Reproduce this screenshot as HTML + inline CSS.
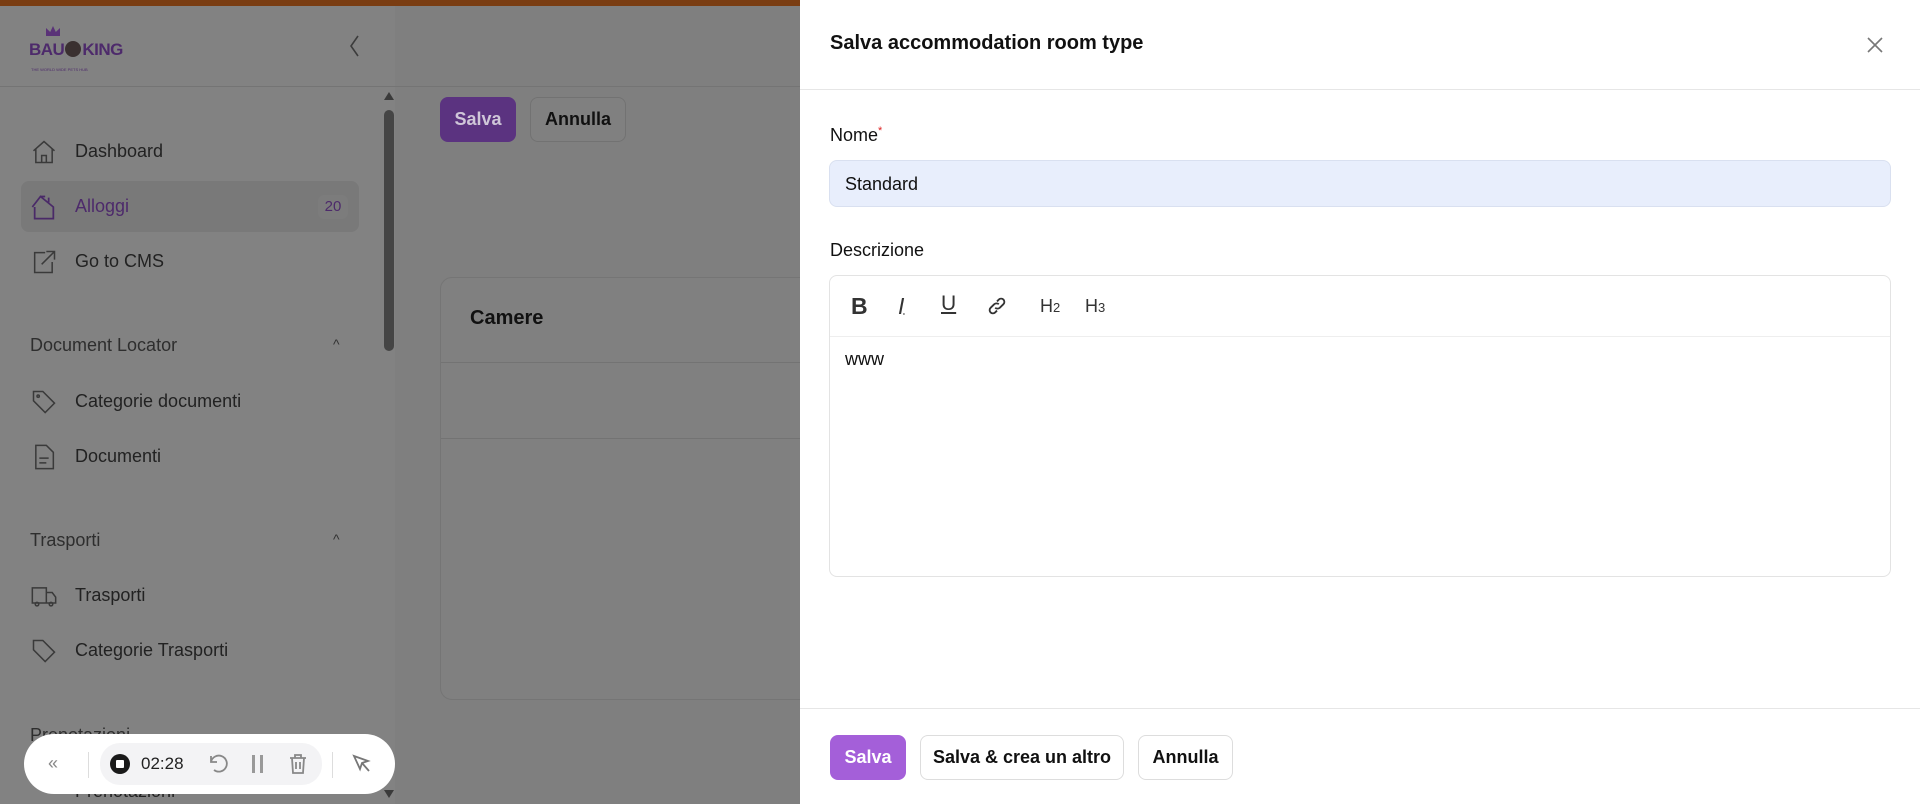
<!DOCTYPE html>
<html><head><meta charset="utf-8"><style>
*{box-sizing:border-box;margin:0;padding:0}
body{width:1920px;height:804px;overflow:hidden;font-family:"Liberation Sans",sans-serif;background:#7f7f7f;position:relative;color:#1c1c1c}
.a{position:absolute}
.nav{position:absolute;left:75px;font-size:18px;color:#222}
.ic{position:absolute;left:30px;width:28px;height:28px}
.btn{position:absolute;border-radius:8px;font-size:18px;font-weight:bold;display:flex;align-items:center;justify-content:center}
</style></head><body>
<div class="a" style="left:0;top:0;width:800px;height:6px;background:#7a3d12"></div>
<div class="a" style="left:0;top:6px;width:395px;height:798px;background:#828282"></div>
<div class="a" style="left:0;top:86px;width:800px;height:1px;background:#747474"></div>
<!-- logo -->
<div class="a" style="left:29px;top:40px;font-size:17px;font-weight:bold;color:#4d2a6b;letter-spacing:-0.5px">BAU<span style="display:inline-block;width:16px;height:16px;border-radius:50%;background:#3a3030;vertical-align:-2px;margin:0 1px"></span>KING</div>
<div class="a" style="left:46px;top:26px;width:14px;height:10px;background:#5a3278;clip-path:polygon(0 100%,0 20%,30% 60%,50% 0,70% 60%,100% 20%,100% 100%)"></div>
<div class="a" style="left:31px;top:67px;font-size:4px;color:#4d2a6b">THE WORLD WIDE PETS HUB</div>
<svg class="a" style="left:347px;top:34px" width="16" height="24" viewBox="0 0 16 24"><path d="M11 2 L4 12 L11 22" stroke="#3c3c3c" stroke-width="1.6" fill="none"/></svg>
<!-- scrollbar -->
<div class="a" style="left:384px;top:92px;width:0;height:0;border-left:5px solid transparent;border-right:5px solid transparent;border-bottom:8px solid #3a3a3a"></div>
<div class="a" style="left:384px;top:110px;width:10px;height:241px;border-radius:5px;background:#454545"></div>
<div class="a" style="left:384px;top:790px;width:0;height:0;border-left:5px solid transparent;border-right:5px solid transparent;border-top:8px solid #3a3a3a"></div>
<!-- nav -->
<svg class="ic" style="top:138px" viewBox="0 0 24 24" fill="none" stroke="#3a3a3a" stroke-width="1.3"><path d="M3 11 L12 3 L21 11 M5 9.5 V21 H19 V9.5 M10 21 V15 H14 V21"/></svg>
<div class="nav" style="top:141px">Dashboard</div>
<div class="a" style="left:21px;top:181px;width:338px;height:51px;border-radius:8px;background:#797979"></div>
<svg class="ic" style="top:193px" viewBox="0 0 24 24" fill="none" stroke="#4a2a68" stroke-width="1.5"><path d="M2 12 L9 3 L20 12 V22 H4 V12 M9 3 L13 3 M16 4 V8"/></svg>
<div class="nav" style="top:196px;color:#4d2a6b">Alloggi</div>
<div class="a" style="left:318px;top:195px;width:30px;height:24px;border-radius:6px;background:#7c7c7c;color:#4d2a6b;font-size:15px;text-align:center;line-height:24px">20</div>
<svg class="ic" style="top:248px" viewBox="0 0 24 24" fill="none" stroke="#3a3a3a" stroke-width="1.3"><path d="M13 4 H4 V21 H19 V12 M14 3 H21 V10 M21 3 L10 14"/></svg>
<div class="nav" style="top:251px">Go to CMS</div>
<div class="a" style="left:30px;top:335px;font-size:18px;color:#2e2e2e">Document Locator</div>
<div class="a" style="left:333px;top:336px;font-size:14px;color:#333">^</div>
<svg class="ic" style="top:388px" viewBox="0 0 24 24" fill="none" stroke="#3a3a3a" stroke-width="1.3"><path d="M3 3 H11 L21 13 L13 21 L3 11 Z"/><circle cx="7" cy="7" r="1"/></svg>
<div class="nav" style="top:391px">Categorie documenti</div>
<svg class="ic" style="top:443px" viewBox="0 0 24 24" fill="none" stroke="#3a3a3a" stroke-width="1.3"><path d="M5 2 H14 L20 8 V22 H5 Z M8 13 H16 M8 17 H14"/></svg>
<div class="nav" style="top:446px">Documenti</div>
<div class="a" style="left:30px;top:530px;font-size:18px;color:#2e2e2e">Trasporti</div>
<div class="a" style="left:333px;top:531px;font-size:14px;color:#333">^</div>
<svg class="ic" style="top:582px" viewBox="0 0 24 24" fill="none" stroke="#3a3a3a" stroke-width="1.3"><path d="M2 5 H14 V18 H2 Z M14 9 H19 L22 13 V18 H14"/><circle cx="6" cy="19" r="1.5"/><circle cx="18" cy="19" r="1.5"/></svg>
<div class="nav" style="top:585px">Trasporti</div>
<svg class="ic" style="top:637px" viewBox="0 0 24 24" fill="none" stroke="#3a3a3a" stroke-width="1.3"><path d="M3 3 H11 L21 13 L13 21 L3 11 Z"/></svg>
<div class="nav" style="top:640px">Categorie Trasporti</div>
<div class="a" style="left:30px;top:725px;font-size:18px;color:#2e2e2e">Prenotazioni</div>
<div class="nav" style="top:781px">Prenotazioni</div>
<!-- main -->
<div class="btn" style="left:440px;top:97px;width:76px;height:45px;background:#5b3380;color:#cfc6d8">Salva</div>
<div class="btn" style="left:530px;top:97px;width:96px;height:45px;background:#808080;border:1px solid #727272;color:#111">Annulla</div>
<div class="a" style="left:440px;top:277px;width:380px;height:423px;border:1px solid #757575;border-radius:12px;background:#808080"></div>
<div class="a" style="left:470px;top:307px;font-size:20px;font-weight:bold;color:#111">Camere</div>
<div class="a" style="left:441px;top:362px;width:360px;height:1px;background:#737373"></div>
<div class="a" style="left:441px;top:438px;width:360px;height:1px;background:#737373"></div>
<!-- recorder -->
<div class="a" style="left:24px;top:734px;width:371px;height:60px;border-radius:30px;background:#fff"></div>
<div class="a" style="left:48px;top:753px;font-size:18px;color:#888">«</div>
<div class="a" style="left:88px;top:752px;width:1px;height:26px;background:#ddd"></div>
<div class="a" style="left:100px;top:743px;width:222px;height:42px;border-radius:20px;background:#f3f3f5"></div>
<div class="a" style="left:110px;top:754px;width:20px;height:20px;border-radius:50%;background:#1a1a1a"></div>
<div class="a" style="left:116px;top:760px;width:8px;height:8px;background:#fff;border-radius:1px"></div>
<div class="a" style="left:141px;top:754px;font-size:17px;color:#222">02:28</div>
<svg class="a" style="left:206px;top:752px" width="24" height="24" viewBox="0 0 24 24" fill="none" stroke="#888" stroke-width="1.8"><path d="M5 10 A8 8 0 1 1 8 18 M5 4 V10 H11"/></svg>
<div class="a" style="left:252px;top:755px;width:3px;height:18px;background:#999"></div><div class="a" style="left:260px;top:755px;width:3px;height:18px;background:#999"></div>
<svg class="a" style="left:287px;top:752px" width="22" height="24" viewBox="0 0 22 24" fill="none" stroke="#888" stroke-width="1.8"><path d="M3 6 H19 M8 6 V3 H14 V6 M5 6 L6 21 H16 L17 6 M9 10 V17 M13 10 V17"/></svg>
<div class="a" style="left:332px;top:752px;width:1px;height:26px;background:#ddd"></div>
<svg class="a" style="left:350px;top:752px" width="24" height="24" viewBox="0 0 24 24" fill="none" stroke="#777" stroke-width="1.8"><path d="M4 4 L18 9 L12 11 L10 17 Z M12 11 L19 19"/></svg>
<!-- panel -->
<div class="a" style="left:800px;top:0;width:1120px;height:804px;background:#fff"></div>
<div class="a" style="left:830px;top:32px;font-size:20px;font-weight:bold;color:#111">Salva accommodation room type</div>
<svg class="a" style="left:1865px;top:35px" width="20" height="20" viewBox="0 0 20 20" stroke="#777" stroke-width="1.6"><path d="M3 3 L17 17 M17 3 L3 17"/></svg>
<div class="a" style="left:800px;top:89px;width:1120px;height:1px;background:#e6e6e6"></div>
<div class="a" style="left:830px;top:125px;font-size:18px;color:#111">Nome<sup style="color:#d22;font-size:11px">*</sup></div>
<div class="a" style="left:829px;top:160px;width:1062px;height:47px;border-radius:8px;background:#e8eefc;border:1px solid #d9e0f0;padding:13px 15px;font-size:18px;color:#111">Standard</div>
<div class="a" style="left:830px;top:240px;font-size:18px;color:#111">Descrizione</div>
<div class="a" style="left:829px;top:275px;width:1062px;height:302px;border-radius:8px;border:1px solid #e3e3e3"></div>
<div class="a" style="left:830px;top:336px;width:1060px;height:1px;background:#eee"></div>
<div class="a" style="left:851px;top:293px;font-size:23px;font-weight:bold;color:#333">B</div>
<div class="a" style="left:898px;top:293px;font-size:23px;font-style:italic;color:#333;text-decoration:underline;text-underline-offset:-1px">I</div>
<div class="a" style="left:941px;top:292px;font-size:21px;color:#333;text-decoration:underline">U</div>
<svg class="a" style="left:986px;top:295px" width="22" height="22" viewBox="0 0 24 24" fill="none" stroke="#333" stroke-width="2"><path d="M10 14 A4 4 0 0 0 15 14 L19 10 A3.5 3.5 0 0 0 14 5 L12 7 M14 10 A4 4 0 0 0 9 10 L5 14 A3.5 3.5 0 0 0 10 19 L12 17"/></svg>
<div class="a" style="left:1040px;top:296px;font-size:18px;color:#333">H<span style="font-size:13px">2</span></div>
<div class="a" style="left:1085px;top:296px;font-size:18px;color:#333">H<span style="font-size:13px">3</span></div>
<div class="a" style="left:845px;top:349px;font-size:18px;color:#111">www</div>
<div class="a" style="left:800px;top:708px;width:1120px;height:1px;background:#e6e6e6"></div>
<div class="btn" style="left:830px;top:735px;width:76px;height:45px;background:#a45fd9;color:#fff">Salva</div>
<div class="btn" style="left:920px;top:735px;width:204px;height:45px;border:1px solid #ddd;color:#111">Salva &amp; crea un altro</div>
<div class="btn" style="left:1138px;top:735px;width:95px;height:45px;border:1px solid #ddd;color:#111">Annulla</div>
</body></html>
